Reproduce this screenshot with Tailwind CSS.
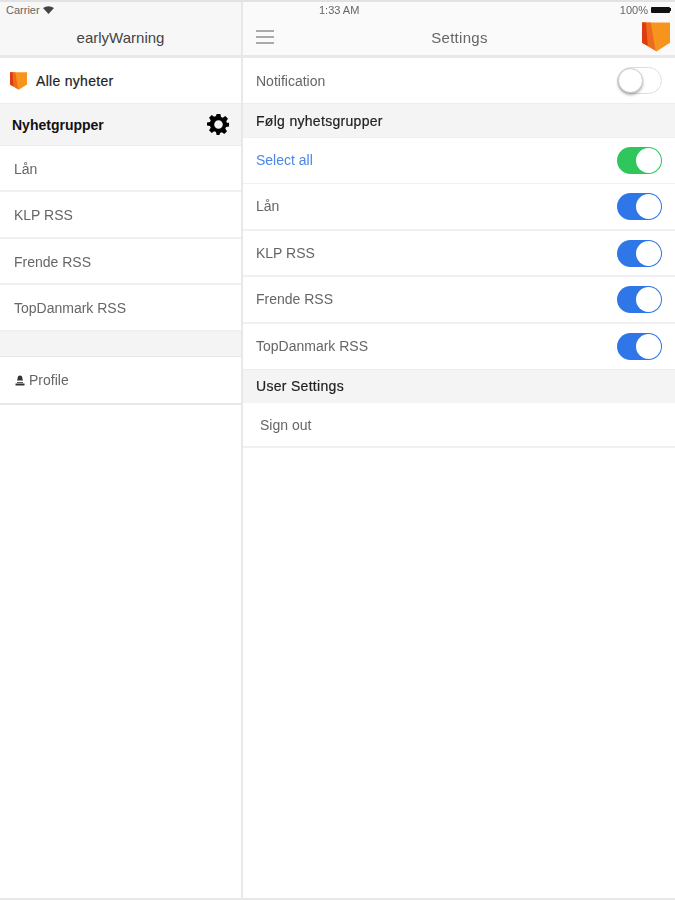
<!DOCTYPE html>
<html lang="en">
<head>
    <meta charset="UTF-8">
    <meta name="viewport" content="width=device-width, initial-scale=1.0">
    <title>earlyWarning Settings</title>
    <script src="https://cdn.jsdelivr.net/npm/@tailwindcss/browser@4"></script>
</head>
<body class="bg-white">
<div class="flex flex-col w-[675px] h-[900px] overflow-hidden font-['Liberation_Sans',sans-serif] text-[14px] text-[#666] blur-[0.4px]">
    <div class="h-[2px] bg-[#e2e2e2]"></div>
    <div class="flex flex-1 min-h-0">

        <!-- Left menu -->
        <div class="flex flex-col w-[243px] border-r-2 border-[#e8e8e8]">
            <div class="h-[53px] bg-[#f7f7f7] flex flex-col">
                <div class="h-[16px] flex items-center gap-[3px] pl-[6px] text-[11px] text-[#666]">
                    <span>Carrier</span>
                    <svg class="w-[11px] h-[8px]" viewBox="0 0 11 8"><path d="M0 2 Q5.500 -1.500 11 2 L5.500 8 Z" fill="#444"/></svg>
                </div>
                <div class="flex-1 flex items-center justify-center text-[15px] text-[#444] pt-[4px]">earlyWarning</div>
            </div>
            <div class="h-[48px] flex items-center pl-[10px] gap-[9px] border-t-[3px] border-[#e8e8e8] text-[#222] bg-white">
                <svg class="w-[17px] h-[18px]" viewBox="0 0 29 30">
                    <path d="M0 0H29V21L15 30L0 21Z" fill="#f7941d"/>
                    <path d="M0 0H9L14 29L0 21Z" fill="#ee6a1c"/>
                    <path d="M0 0H4L6 24L0 21Z" fill="#dd3b12"/>
                </svg>
                <span class="text-[14px] tracking-[0.3px] pt-[2px] [-webkit-text-stroke:0.2px_#222]">Alle nyheter</span>
            </div>
            <div class="h-[43px] flex items-center justify-between pl-[12px] pr-[11px] bg-[#f4f4f4] border-t border-b border-[#ececec] text-[#111] font-bold">
                <span class="text-[14px] pt-[2px]">Nyhetgrupper</span>
                <svg class="w-[23px] h-[23px]" viewBox="0 0 24 24" fill="#000">
                    <path fill-rule="evenodd" d="M10 1h4l.6 3.100 1.900.8 2.600-1.800 2.800 2.800-1.800 2.600.8 1.900L23 10v4l-3.100.6-.8 1.900 1.800 2.600-2.800 2.800-2.600-1.800-1.900.8L13 23h-3l-.6-3.100-1.900-.8-2.600 1.800-2.800-2.800 1.800-2.600-.8-1.900L0 13v-3l3.100-.6.8-1.900L2.100 4.900l2.800-2.800 2.600 1.800 1.900-.8zM12 7.500a4.500 4.500 0 1 0 0 9 4.500 4.500 0 0 0 0-9z"/>
                </svg>
            </div>
            <div class="h-[46px] flex items-center pl-[14px] pt-[2px] border-b-2 border-[#f0f0f0]">Lån</div>
            <div class="h-[47px] flex items-center pl-[14px] pt-[2px] border-b-2 border-[#f0f0f0]">KLP RSS</div>
            <div class="h-[46px] flex items-center pl-[14px] pt-[2px] border-b-2 border-[#f0f0f0]">Frende RSS</div>
            <div class="h-[47px] flex items-center pl-[14px] pt-[2px] border-b-2 border-[#f0f0f0]">TopDanmark RSS</div>
            <div class="h-[25px] bg-[#f4f4f4] border-b border-[#e8e8e8]"></div>
            <div class="h-[48px] flex items-center pl-[15px] gap-[4px] border-b-2 border-[#e8e8e8]">
                <svg class="w-[10px] h-[11px]" viewBox="0 0 10 11" fill="#333">
                    <path d="M2.500 4C2.500 1.500 3.500 0.500 5 0.500S7.500 1.500 7.500 4L8 5.500H2Z"/>
                    <path d="M0.500 8.500H9.500V10.500H0.500Z"/>
                    <path d="M2 7H8V7.800H2Z"/>
                </svg>
                <span>Profile</span>
            </div>
        </div>

        <!-- Settings panel -->
        <div class="flex flex-col flex-1 min-w-0">
            <div class="h-[53px] bg-[#fafafa] flex flex-col">
                <div class="h-[16px] flex items-center justify-between pl-[76px] pr-[4px] text-[11px] text-[#666]">
                    <span>1:33 AM</span>
                    <div class="flex items-center gap-[3px]">
                        <span>100%</span>
                        <div class="flex items-center mb-[1px]">
                            <div class="w-[19px] h-[6px] bg-[#111] rounded-[1px]"></div>
                            <div class="w-[1px] h-[3px] bg-[#111]"></div>
                        </div>
                    </div>
                </div>
                <div class="flex-1 flex items-center justify-between pl-[13px] pr-[5px]">
                    <div class="flex flex-col gap-[4px] w-[18px] mt-[1px]">
                        <div class="h-[2px] bg-[#aaa]"></div>
                        <div class="h-[2px] bg-[#aaa]"></div>
                        <div class="h-[2px] bg-[#aaa]"></div>
                    </div>
                    <span class="text-[15px] tracking-[0.3px] text-[#666] ml-[3px] pt-[4px]">Settings</span>
                    <svg class="w-[28px] h-[30px]" viewBox="0 0 29 30">
                        <path d="M0 0H29V21L15 30L0 21Z" fill="#f7941d"/>
                        <path d="M0 0H9L14 29L0 21Z" fill="#ee6a1c"/>
                        <path d="M0 0H4L6 24L0 21Z" fill="#dd3b12"/>
                    </svg>
                </div>
            </div>
            <div class="h-[48px] flex items-center justify-between pl-[13px] pr-[13px] border-t-[3px] border-[#e8e8e8]">
                <span class="pt-[2px]">Notification</span>
                <div class="w-[45px] h-[27px] rounded-full bg-white border border-[#ddd] flex items-center justify-start">
                    <div class="w-[25px] h-[25px] rounded-full bg-white border border-[#ccc] shadow-[0_2px_3px_rgba(0,0,0,0.3)]"></div>
                </div>
            </div>
            <div class="h-[34px] flex items-center pl-[13px] bg-[#f4f4f4] text-[#222] border-t border-[#ececec]">
                <span class="text-[14px] tracking-[0.3px] pt-[2px] [-webkit-text-stroke:0.2px_#222]">Følg nyhetsgrupper</span>
            </div>
            <div class="h-[47px] flex items-center justify-between pl-[13px] pr-[13px] border-t border-b border-[#f0f0f0]">
                <span class="text-[#4a86e8]">Select all</span>
                <div class="w-[45px] h-[27px] rounded-full bg-[#2fc65c] flex items-center justify-end pr-[1px]">
                    <div class="w-[25px] h-[25px] rounded-full bg-white"></div>
                </div>
            </div>
            <div class="h-[47px] flex items-center justify-between pl-[13px] pr-[13px] border-b-2 border-[#f0f0f0]">
                <span>Lån</span>
                <div class="w-[45px] h-[27px] rounded-full bg-[#2f76e8] flex items-center justify-end pr-[1px]">
                    <div class="w-[25px] h-[25px] rounded-full bg-white"></div>
                </div>
            </div>
            <div class="h-[46px] flex items-center justify-between pl-[13px] pr-[13px] border-b-2 border-[#f0f0f0]">
                <span>KLP RSS</span>
                <div class="w-[45px] h-[27px] rounded-full bg-[#2f76e8] flex items-center justify-end pr-[1px]">
                    <div class="w-[25px] h-[25px] rounded-full bg-white"></div>
                </div>
            </div>
            <div class="h-[47px] flex items-center justify-between pl-[13px] pr-[13px] border-b-2 border-[#f0f0f0]">
                <span>Frende RSS</span>
                <div class="w-[45px] h-[27px] rounded-full bg-[#2f76e8] flex items-center justify-end pr-[1px]">
                    <div class="w-[25px] h-[25px] rounded-full bg-white"></div>
                </div>
            </div>
            <div class="h-[45px] flex items-center justify-between pl-[13px] pr-[13px]">
                <span>TopDanmark RSS</span>
                <div class="w-[45px] h-[27px] rounded-full bg-[#2f76e8] flex items-center justify-end pr-[1px]">
                    <div class="w-[25px] h-[25px] rounded-full bg-white"></div>
                </div>
            </div>
            <div class="h-[34px] flex items-center pl-[13px] bg-[#f4f4f4] text-[#222] border-t border-[#ececec]">
                <span class="text-[14px] tracking-[0.3px] [-webkit-text-stroke:0.2px_#222]">User Settings</span>
            </div>
            <div class="h-[45px] flex items-center pl-[17px] pt-[2px] border-b-2 border-[#f0f0f0]">Sign out</div>
        </div>
    </div>
    <div class="h-[2px] bg-[#e8e8e8]"></div>
</div>
</body>
</html>
